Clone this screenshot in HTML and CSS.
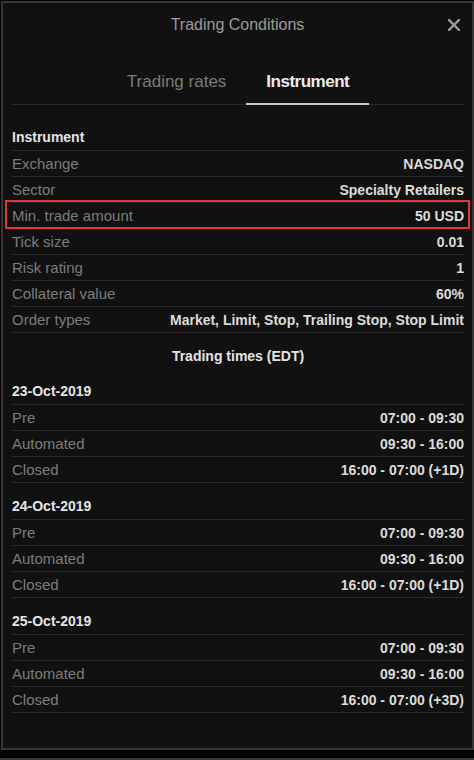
FILE: index.html
```html
<!DOCTYPE html>
<html lang="en">
<head>
  <meta charset="UTF-8">
  <meta name="viewport" content="width=device-width, initial-scale=1.0">
  <title>Trading Conditions</title>
  <link rel="stylesheet" href="styles.css">
</head>
<body>

  <!-- Trading conditions dialog -->
  <div class="dialog">
    <div class="dialog-header">
      <span></span>
      <h1 class="dialog-title">Trading Conditions</h1>
      <button class="close-btn" aria-label="Close">
        <svg width="12" height="12" viewBox="0 0 12 12">
          <path d="M1 1 L11 11 M11 1 L1 11" stroke="#9a9a9a" stroke-width="2.4" stroke-linecap="square"/>
        </svg>
      </button>
    </div>

    <div class="content">
      <div class="tabs">
        <span class="tab">Trading rates</span>
        <span class="tab active">Instrument</span>
      </div>

      <!-- Instrument details -->
      <div class="info-list">
        <div class="row row-head">Instrument</div>
        <div class="row"><span class="label">Exchange</span><span class="value">NASDAQ</span></div>
        <div class="row"><span class="label">Sector</span><span class="value">Specialty Retailers</span></div>
        <div class="row highlight"><span class="label">Min. trade amount</span><span class="value">50 USD</span></div>
        <div class="row"><span class="label">Tick size</span><span class="value">0.01</span></div>
        <div class="row"><span class="label">Risk rating</span><span class="value">1</span></div>
        <div class="row"><span class="label">Collateral value</span><span class="value">60%</span></div>
        <div class="row"><span class="label">Order types</span><span class="value">Market, Limit, Stop, Trailing Stop, Stop Limit</span></div>
      </div>

      <div class="times-title">Trading times (EDT)</div>

      <!-- Trading times per day -->
      <div class="day">
        <div class="row row-head">23-Oct-2019</div>
        <div class="row"><span class="label">Pre</span><span class="value">07:00 - 09:30</span></div>
        <div class="row"><span class="label">Automated</span><span class="value">09:30 - 16:00</span></div>
        <div class="row"><span class="label">Closed</span><span class="value">16:00 - 07:00 (+1D)</span></div>
      </div>

      <div class="day">
        <div class="row row-head">24-Oct-2019</div>
        <div class="row"><span class="label">Pre</span><span class="value">07:00 - 09:30</span></div>
        <div class="row"><span class="label">Automated</span><span class="value">09:30 - 16:00</span></div>
        <div class="row"><span class="label">Closed</span><span class="value">16:00 - 07:00 (+1D)</span></div>
      </div>

      <div class="day">
        <div class="row row-head">25-Oct-2019</div>
        <div class="row"><span class="label">Pre</span><span class="value">07:00 - 09:30</span></div>
        <div class="row"><span class="label">Automated</span><span class="value">09:30 - 16:00</span></div>
        <div class="row"><span class="label">Closed</span><span class="value">16:00 - 07:00 (+3D)</span></div>
      </div>
    </div>
  </div>

  <div class="footer-bar"></div>

</body>
</html>
```

FILE: styles.css
```css
/* Page */
body, html {
  margin: 0;
  padding: 0;
  background-color: #030303;
  font-family: "Liberation Sans", Arial, sans-serif;
  height: 100%;
  overflow: hidden;
}

/* Dialog box */
.dialog {
  box-sizing: border-box;
  width: 473px;
  height: 749px;
  margin: 1px 0 0 1px;
  background-color: #111111;
  border: 2px solid #363636;
}

.dialog-header {
  display: grid;
  grid-template-columns: 1fr auto 1fr;
  align-items: center;
  height: 43px;
}

.dialog-title {
  margin: 0;
  font-size: 16px;
  font-weight: normal;
  color: #9b9b9b;
}

.close-btn {
  justify-self: end;
  margin-right: 12px;
  padding: 0;
  width: 12px;
  height: 12px;
  background: none;
  border: none;
  cursor: pointer;
  display: flex;
}

.content {
  padding: 0 8px 0 9px;
}

/* Tabs */
.tabs {
  display: flex;
  justify-content: center;
  margin-top: 14px;
  border-bottom: 1px solid #2a2a2a;
}

.tab {
  padding: 12px 20px 11px;
  margin-bottom: -1px;
  line-height: 20px;
  font-size: 17px;
  color: #7b7b7b;
  border-bottom: 2px solid transparent;
  cursor: pointer;
}

.tab.active {
  color: #ececec;
  font-weight: bold;
  letter-spacing: -0.5px;
  border-bottom-color: #c9c9c9;
}

/* Rows */
.info-list {
  margin-top: 20px;
}

.row {
  box-sizing: border-box;
  height: 26px;
  display: flex;
  align-items: center;
  justify-content: space-between;
  border-bottom: 1px solid #282828;
  position: relative;
}

.row-head {
  padding-bottom: 2px;
  font-size: 14px;
  font-weight: bold;
  color: #e4e4e4;
}

.label {
  font-size: 15px;
  color: #7c7c7c;
}

.value {
  font-size: 14px;
  font-weight: bold;
  color: #dcdcdc;
}

/* Red highlight around one row */
.highlight::after {
  content: "";
  position: absolute;
  top: -3px;
  bottom: -1px;
  left: -7px;
  right: -6px;
  border: 2px solid #e1373b;
  pointer-events: none;
}

.times-title {
  height: 46px;
  display: flex;
  align-items: center;
  justify-content: center;
  font-size: 14px;
  font-weight: bold;
  color: #e4e4e4;
}

.day {
  margin-bottom: 11px;
}

/* Strip below the dialog */
.footer-bar {
  margin-top: 8px;
  border-top: 2px solid #3a3a3a;
}
```
